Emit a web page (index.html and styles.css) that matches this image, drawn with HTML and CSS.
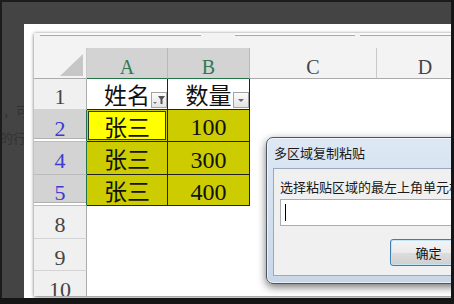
FILE: index.html
```html
<!DOCTYPE html>
<html>
<head>
    <meta charset="utf-8">
    <title>多区域复制粘贴</title>
    <link rel="stylesheet" href="styles.css">
</head>
<body>
    <div class="screen">
        <!-- 背后被遮住的网页文字 -->
        <div class="aside">
            <p class="aside-l1">，可以</p>
            <p class="aside-l2">的行</p>
        </div>
        <div class="main">
            <div class="shot">
                <div class="excel">
                    <div class="fbar">
                        <span class="fbox fbox-name"></span>
                        <span class="fbox fbox-mid"></span>
                        <span class="fbox fbox-fx"></span>
                    </div>
                    <div class="sheet">
                        <div class="corner">
                            <svg width="23" height="22" viewBox="0 0 23 22"><polygon points="0,22 23,22 23,0" fill="#c6c6c6"/></svg>
                        </div>
                        <div class="ch sel">A</div>
                        <div class="ch sel">B</div>
                        <div class="ch">C</div>
                        <div class="ch">D</div>

                        <div class="rh">1</div>
                        <div class="cell d title">姓名<span class="filter"><svg width="14" height="13" viewBox="0 0 14 13"><polygon points="1,9 5,9 3,11" fill="#777"/><polygon points="6,3 13,3 10.5,6.5 10.5,11 8.5,11 8.5,6.5" fill="#555"/></svg></span></div>
                        <div class="cell d title">数量<span class="filter"><svg width="14" height="13" viewBox="0 0 14 13"><polygon points="4,6 10,6 7,9" fill="#6a6a6a"/></svg></span></div>
                        <div class="cell"></div>
                        <div class="cell"></div>

                        <div class="rh f hid">2</div>
                        <div class="cell d active">张三</div>
                        <div class="cell d olive num">100</div>
                        <div class="cell"></div>
                        <div class="cell"></div>

                        <div class="rh f">4</div>
                        <div class="cell d olive">张三</div>
                        <div class="cell d olive num">300</div>
                        <div class="cell"></div>
                        <div class="cell"></div>

                        <div class="rh f hid">5</div>
                        <div class="cell d olive">张三</div>
                        <div class="cell d olive num">400</div>
                        <div class="cell"></div>
                        <div class="cell"></div>

                        <div class="rh">8</div>
                        <div class="cell"></div>
                        <div class="cell"></div>
                        <div class="cell"></div>
                        <div class="cell"></div>

                        <div class="rh">9</div>
                        <div class="cell"></div>
                        <div class="cell"></div>
                        <div class="cell"></div>
                        <div class="cell"></div>

                        <div class="rh">10</div>
                        <div class="cell"></div>
                        <div class="cell"></div>
                        <div class="cell"></div>
                        <div class="cell"></div>
                    </div>
                </div>

                <!-- 多区域复制粘贴 对话框 -->
                <div class="dialog">
                    <div class="dlg-title">多区域复制粘贴</div>
                    <div class="dlg-body">
                        <div class="dlg-label">选择粘贴区域的最左上角单元格</div>
                        <div class="dlg-input"><span class="caret"></span></div>
                        <div class="dlg-btn">确定</div>
                    </div>
                </div>
            </div>
        </div>
    </div>
</body>
</html>
```

FILE: styles.css
```css
body {
    margin: 0;
    padding: 0;
    background: #151515;
    font-family: "Liberation Serif", "Noto Sans CJK SC", serif;
}

.screen {
    width: 449px;
    height: 296px;
    display: flex;
    background: #444;
    border-top: 2px solid #1c1c1c;
    border-left: 2px solid #1c1c1c;
}

.aside {
    width: 22px;
    flex: none;
    overflow: hidden;
    padding-top: 95px;
    box-sizing: border-box;
    font-family: "Noto Sans CJK SC", sans-serif;
    font-size: 13px;
    line-height: 27px;
    color: #333;
    white-space: nowrap;
}

.aside p {
    margin: 0;
}

.aside-l1 {
    padding-left: 1px;
}

.aside-l2 {
    margin-left: -2px !important;
}

.main {
    padding-top: 22px;
}

.shot {
    position: relative;
    width: 427px;
    height: 274px;
    background: #fff;
    overflow: hidden;
    padding: 9px 0 0 10px;
    box-sizing: border-box;
}

.excel {
    width: 440px;
    height: 263px;
    background: #f3f3f3;
    overflow: hidden;
    box-shadow: 0 0 3px rgba(0, 0, 0, 0.35), 0 2px 4px rgba(0, 0, 0, 0.3);
}

.fbar {
    height: 15px;
    display: flex;
    padding-left: 6px;
}

.fbox {
    height: 2px;
    background: #fafafa;
    border-bottom: 1px solid #a8a8a8;
}

.fbox-name {
    width: 161px;
}

.fbox-mid {
    width: 120px;
    margin-left: 34px;
}

.fbox-fx {
    flex: 1;
    margin-left: 5px;
}

.sheet {
    display: grid;
    grid-template-columns: 53px 81px 82px 127px 97px;
    grid-template-rows: 31px 31px 32px 33px 31px 33px 32px 32px;
    background: #fff;
}

.sheet > div {
    box-sizing: border-box;
    display: flex;
    align-items: center;
    justify-content: center;
    position: relative;
}

.corner {
    background: #f3f3f3;
    border-right: 1px solid #c9c9c9;
    border-bottom: 1px solid #ababab;
    justify-content: flex-end !important;
    align-items: flex-end !important;
    padding: 0 3px 2px 0;
}

.corner svg {
    display: block;
}

.ch {
    background: #f3f3f3;
    border-right: 1px solid #c9c9c9;
    border-bottom: 1px solid #ababab;
    color: #444;
    font-size: 20px;
    padding-top: 9px;
}

.ch.sel {
    background: #d3d3d3;
    color: #2f7a52;
    border-right-color: #b9b9b9;
    border-bottom: 1px solid #217346;
}

.rh {
    background: #f0f0f0;
    border-right: 1px solid #ababab;
    border-bottom: 1px solid #d4d4d4;
    color: #444;
    font-size: 22px;
    padding-top: 6px;
}

.rh.f {
    background: #d3d3d3;
    color: #3b3bcf;
    border-right-color: #217346;
    border-bottom-color: #bcbcbc;
}

.rh.hid {
    box-shadow: inset 0 -2px 0 #fff, inset 0 -3px 0 #b0b0b0;
}

.cell {
    font-family: "Noto Sans CJK SC", sans-serif;
    font-size: 23px;
    line-height: 28px;
    color: #111;
}

.cell.d {
    border-right: 1px solid #222;
    border-bottom: 1px solid #222;
}

.cell.num {
    font-family: "Liberation Serif", serif;
    font-size: 24px;
    padding-top: 3px;
}

.title {
    background: #fff;
}

.olive {
    background: #cccc00;
}

.active {
    background: #ffff00;
    box-shadow: inset 0 0 0 1px #cccc00, inset 0 0 0 2px #2d3a22;
}

.filter {
    position: absolute;
    right: 0;
    top: 13px;
    width: 16px;
    height: 16px;
    box-sizing: border-box;
    border: 1px solid #a3a3a3;
    background: linear-gradient(#fbfbfb, #e4e4e4);
}

.filter svg {
    display: block;
}

.dialog {
    position: absolute;
    left: 242px;
    top: 113px;
    width: 240px;
    padding: 0 0 7px 6px;
    border: 1px solid #4d5661;
    border-radius: 7px;
    background: linear-gradient(#dde8f4, #c8d7e8);
    box-shadow: 0 3px 9px rgba(0, 0, 0, 0.55), inset 0 0 0 1px rgba(255, 255, 255, 0.6);
    font-family: "Noto Sans CJK SC", sans-serif;
    font-size: 13px;
    color: #1a1a1a;
}

.dlg-title {
    height: 30px;
    line-height: 30px;
    padding-left: 1px;
}

.dlg-body {
    background: #f0f0f0;
    border: 1px solid #98a9bd;
    padding: 9px 0 9px 6px;
}

.dlg-label {
    line-height: 17px;
    white-space: nowrap;
}

.dlg-input {
    margin-top: 4px;
    height: 27px;
    box-sizing: border-box;
    border: 1px solid #abadb3;
    background: #fff;
}

.caret {
    display: block;
    width: 1px;
    height: 17px;
    margin: 4px 0 0 4px;
    background: #000;
}

.dlg-btn {
    margin: 13px 0 0 110px;
    width: 77px;
    height: 27px;
    box-sizing: border-box;
    border: 1px solid #3c7fb1;
    border-radius: 3px;
    background: linear-gradient(#f4f4f4 0%, #ebebeb 50%, #dddddd 51%, #cfcfcf 100%);
    box-shadow: inset 0 0 0 1px #c4e5f6;
    display: flex;
    align-items: center;
    justify-content: center;
    color: #111;
}
```
